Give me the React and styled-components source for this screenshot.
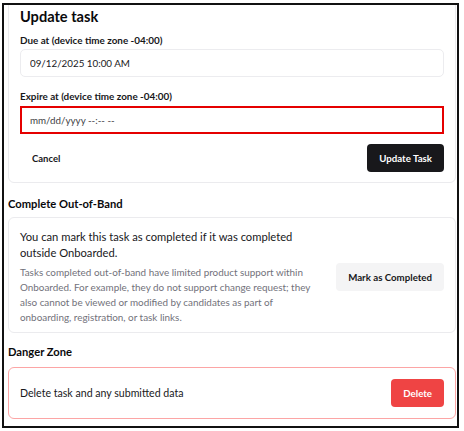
import React from "react";
import styled, { createGlobalStyle } from "styled-components";

const FONT = `Lato, "Noto Sans", Arial, sans-serif`;

const Global = createGlobalStyle`
  html, body { margin: 0; padding: 0; background: #ffffff; }
  body { font-family: ${FONT}; color: #09090b; }
  * { box-sizing: border-box; }
`;

const Frame = styled.div`
  margin: 3px 0 0 2px;
  width: 457px;
  height: 425px;
  border: 2px solid #111111;
  overflow: hidden;
  background: #ffffff;
`;

const Content = styled.div`
  margin-top: -13px;
  padding: 0 1px 0 4px;
  display: flex;
  flex-direction: column;
`;

const Card = styled.div`
  border: 1px solid ${(p) => (p.$danger ? "#fca5a5" : "#ebebee")};
  border-radius: 6px;
  background: #ffffff;
  padding: ${(p) => p.$pad || "11px"};
`;

const Title = styled.h2`
  margin: 0;
  font-size: 14.6px;
  line-height: 24px;
  font-weight: 700;
  color: #09090b;
`;

const Field = styled.div`
  display: flex;
  flex-direction: column;
  gap: ${(p) => p.$gap || "1px"};
  margin-top: ${(p) => p.$mt || "0px"};
`;

const Label = styled.label`
  font-size: 9.9px;
  line-height: 16px;
  font-weight: 700;
  color: #18181b;
`;

const Input = styled.input`
  height: 28px;
  width: 100%;
  border: ${(p) => (p.$error ? "2px solid #e50000" : "1px solid #ececef")};
  border-radius: ${(p) => (p.$error ? "0" : "5px")};
  padding: 0 ${(p) => (p.$error ? "8px" : "9px")};
  font-family: ${FONT};
  font-size: 9.8px;
  color: #18181b;
  background: #ffffff;
  outline: none;
  &::placeholder { color: #3f3f46; opacity: 1; }
`;

const Actions = styled.div`
  display: flex;
  justify-content: space-between;
  align-items: center;
  margin-top: 10px;
`;

const Button = styled.button`
  height: 28px;
  padding: 0 12px;
  border: none;
  border-radius: 4px;
  font-family: ${FONT};
  font-weight: 700;
  font-size: 9.7px;
  cursor: pointer;
  white-space: nowrap;
  flex: none;
  background: ${(p) =>
    p.$variant === "dark"
      ? "#18181b"
      : p.$variant === "danger"
      ? "#ef4444"
      : "#f4f4f5"};
  color: ${(p) => (p.$variant === "dark" || p.$variant === "danger" ? "#ffffff" : "#18181b")};
`;

const GhostButton = styled.button`
  height: 28px;
  padding: 0 12px;
  border: none;
  background: transparent;
  font-family: ${FONT};
  font-weight: 700;
  font-size: 9.5px;
  color: #18181b;
  cursor: pointer;
`;

const SectionHeading = styled.h3`
  margin: ${(p) => p.$m || "10px 0 4px"};
  font-size: 11.2px;
  line-height: 20px;
  font-weight: 700;
  color: #09090b;
`;

const Row = styled.div`
  display: flex;
  align-items: center;
  justify-content: space-between;
  gap: 20px;
`;

const TextCol = styled.div`
  flex: 1;
  min-width: 0;
  display: flex;
  flex-direction: column;
  gap: 4px;
`;

const Lead = styled.p`
  margin: 0;
  font-size: 11.2px;
  line-height: 16px;
  color: #18181b;
`;

const Note = styled.p`
  margin: 0;
  font-size: 9.9px;
  line-height: 15px;
  color: #71717a;
`;

const DangerText = styled.span`
  font-size: 10.6px;
  line-height: 18px;
  color: #18181b;
`;

export default function App() {
  return (
    <>
      <Global />
      <Frame>
        <Content>
          <Card $pad="12px 11px 10px 11px">
            <Title>Update task</Title>
            <Field $mt="3px">
              <Label>Due at (device time zone -04:00)</Label>
              <Input type="text" readOnly value="09/12/2025 10:00 AM" />
            </Field>
            <Field $mt="11px" $gap="2px">
              <Label>Expire at (device time zone -04:00)</Label>
              <Input type="text" $error placeholder="mm/dd/yyyy --:-- --" />
            </Field>
            <Actions>
              <GhostButton>Cancel</GhostButton>
              <Button $variant="dark">Update Task</Button>
            </Actions>
          </Card>

          <SectionHeading $m="11px 0 3px">Complete Out-of-Band</SectionHeading>
          <Card $pad="11px 11px 7px 11px">
            <Row>
              <TextCol>
                <Lead>You can mark this task as completed if it was completed outside Onboarded.</Lead>
                <Note>
                  Tasks completed out-of-band have limited product support within Onboarded. For
                  example, they do not support change request; they also cannot be viewed or
                  modified by candidates as part of onboarding, registration, or task links.
                </Note>
              </TextCol>
              <Button>Mark as Completed</Button>
            </Row>
          </Card>

          <SectionHeading $m="9px 0 5px">Danger Zone</SectionHeading>
          <Card $danger $pad="11px 11px 11px 11px">
            <Row>
              <DangerText>Delete task and any submitted data</DangerText>
              <Button $variant="danger">Delete</Button>
            </Row>
          </Card>
        </Content>
      </Frame>
    </>
  );
}
